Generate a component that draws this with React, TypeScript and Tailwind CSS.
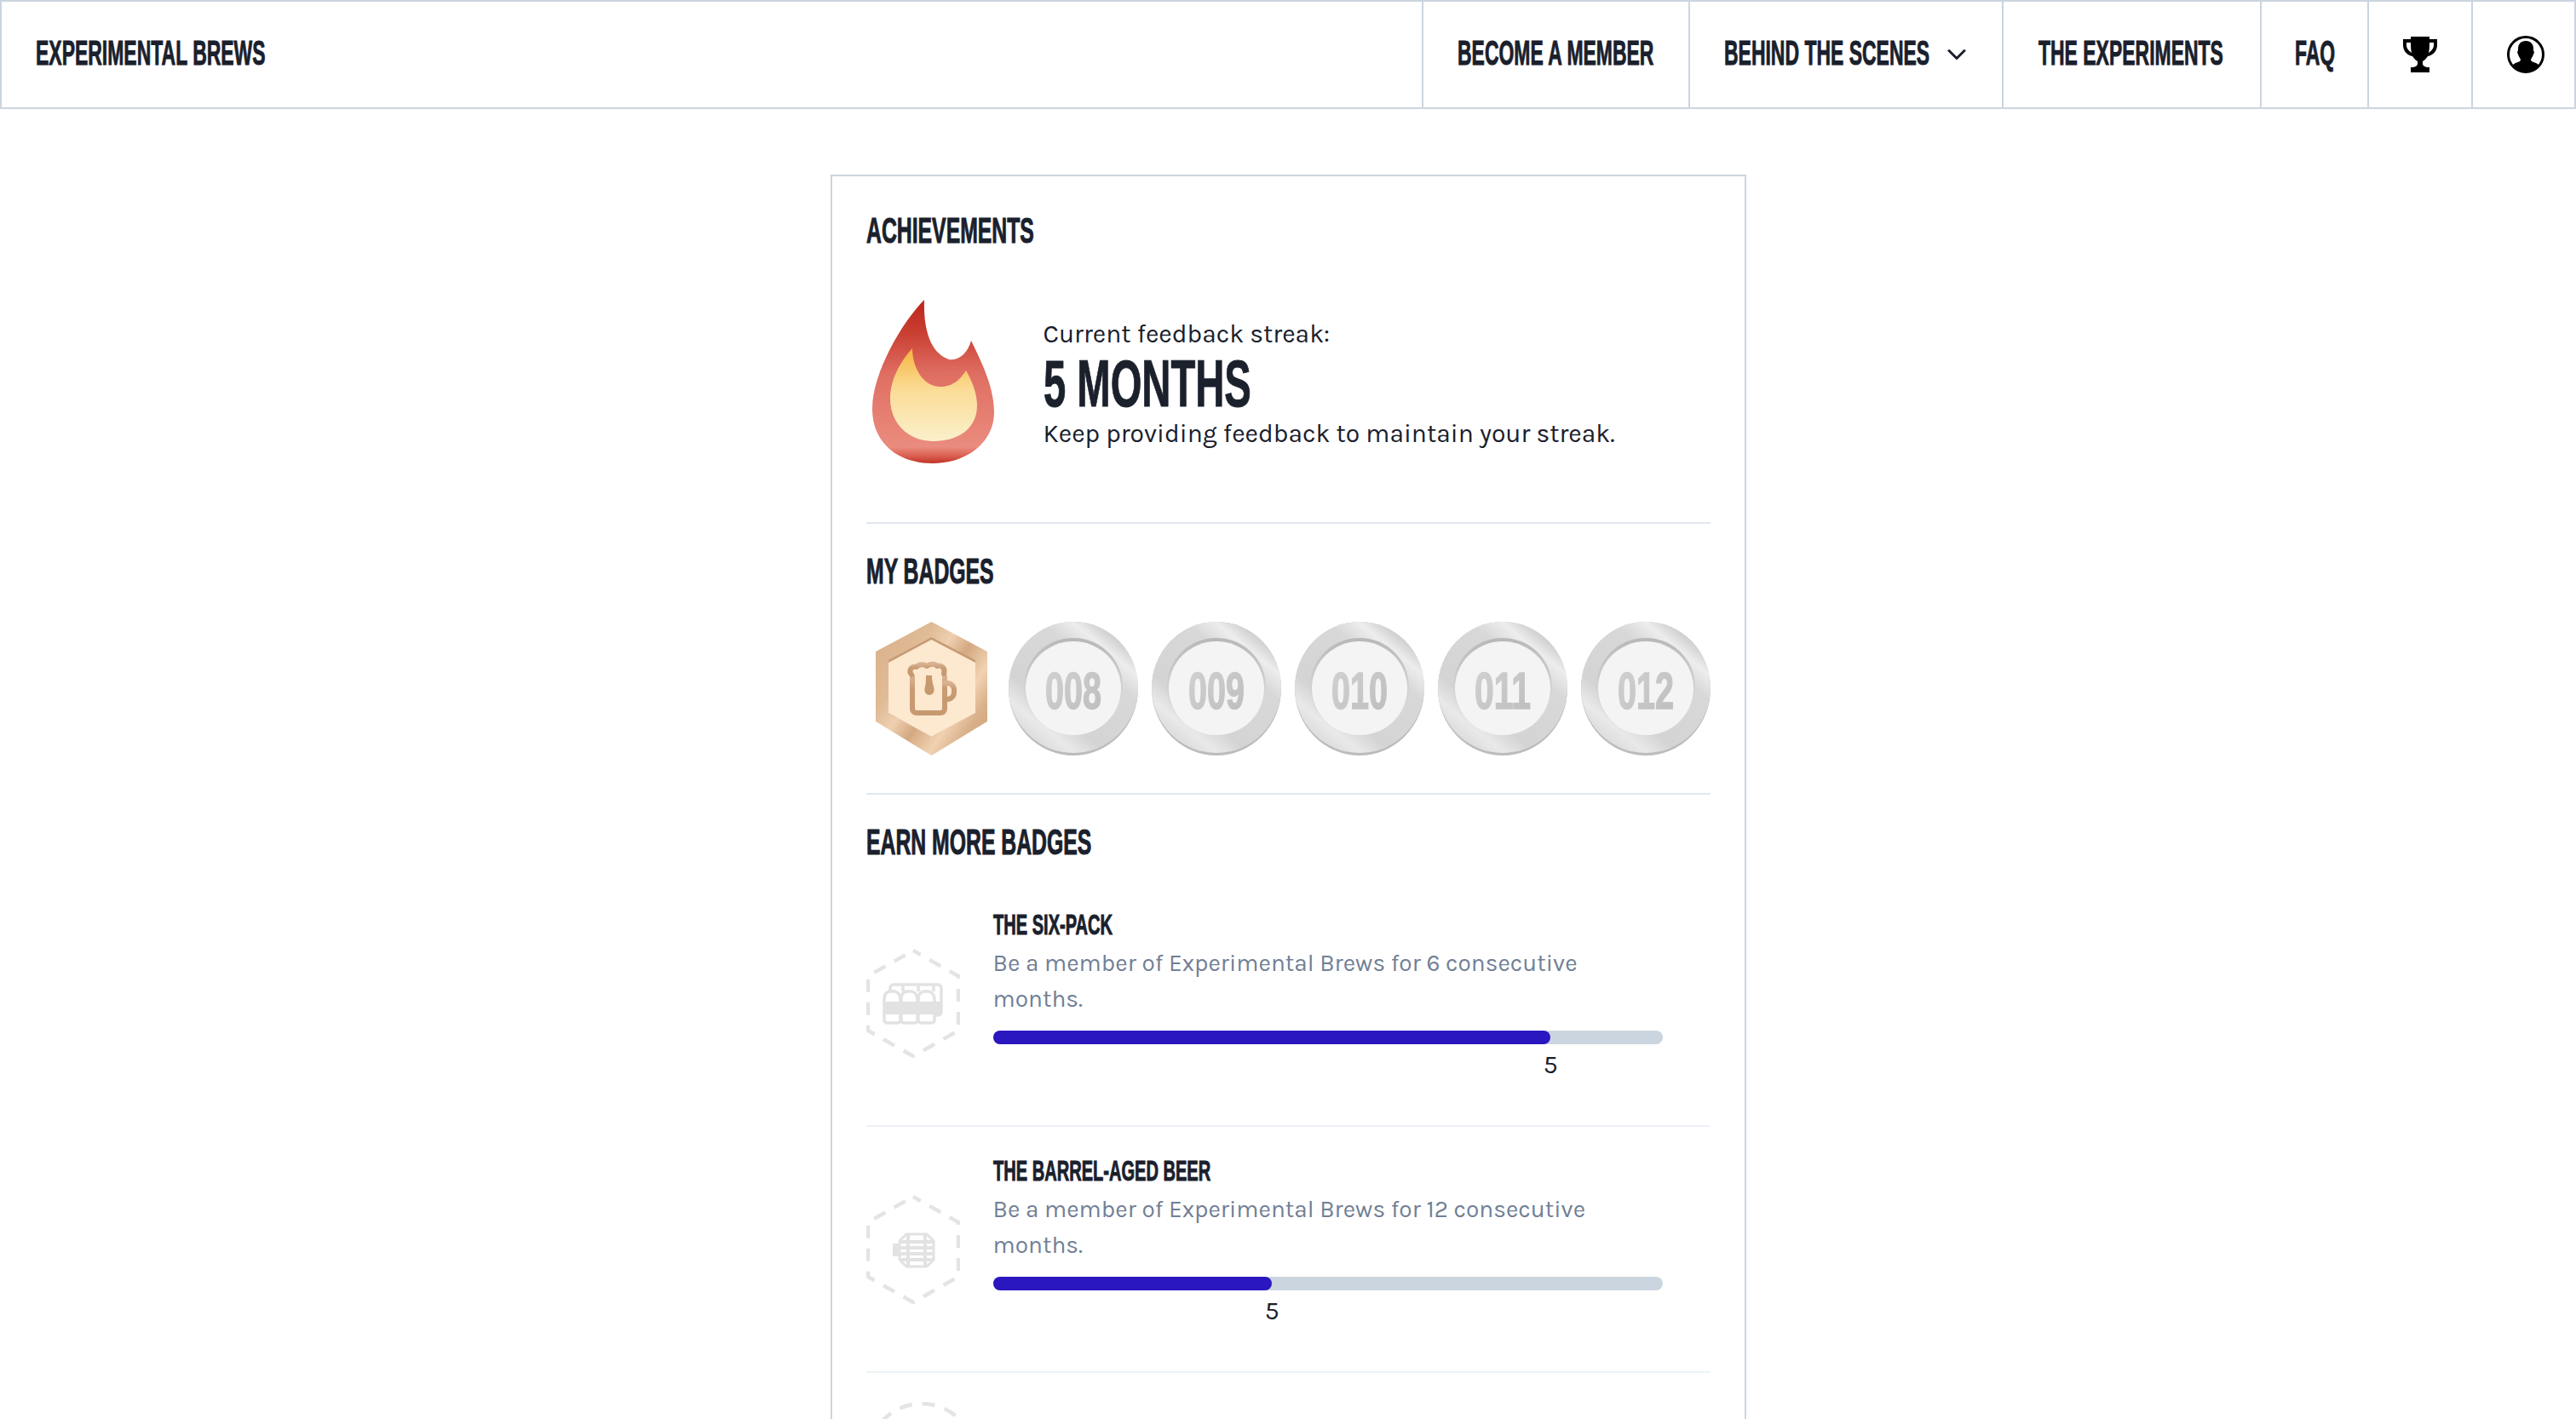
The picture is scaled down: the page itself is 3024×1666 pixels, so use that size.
import React from 'react';
import { ChevronDown } from 'lucide-react';

const heading =
  "block origin-left -translate-y-0.5 whitespace-nowrap font-['Liberation_Sans',sans-serif] font-bold uppercase text-[#1a202c] [-webkit-text-stroke:1px_#1a202c]";
const body = "font-['Karla','Lato','Open_Sans',sans-serif]";
const navText = `${heading} text-[41px] leading-[48px] scale-x-[0.56]`;
const sectionTitle = `${heading} text-[42px] leading-[56px] scale-x-[0.59]`;

const coins = ['008', '009', '010', '011', '012'];

const Coin = ({ label }: { label: string }) => (
  <svg width="152" height="157" viewBox="0 0 152 157">
    <defs>
      <linearGradient id={`ring-${label}`} x1="0.1" y1="1" x2="0.9" y2="0">
        <stop offset="0" stopColor="#cfcfcf" />
        <stop offset="0.2" stopColor="#e9e9e9" />
        <stop offset="0.32" stopColor="#d4d4d4" />
        <stop offset="0.68" stopColor="#d8d8d8" />
        <stop offset="0.8" stopColor="#ededed" />
        <stop offset="0.88" stopColor="#d2d2d2" />
        <stop offset="1" stopColor="#cdcdcd" />
      </linearGradient>
      <linearGradient id={`lip-${label}`} x1="0" y1="0" x2="0" y2="1">
        <stop offset="0" stopColor="#b8b8b8" />
        <stop offset="0.55" stopColor="#d4d4d4" />
        <stop offset="1" stopColor="#e4e4e4" />
      </linearGradient>
      <linearGradient id={`num-${label}`} x1="0" y1="0" x2="1" y2="1">
        <stop offset="0" stopColor="#d2d2d2" />
        <stop offset="1" stopColor="#bdbdbd" />
      </linearGradient>
    </defs>
    <ellipse cx="76" cy="78.5" rx="76" ry="78.5" fill="#bcbcbc" />
    <ellipse cx="76" cy="77" rx="76" ry="77" fill={`url(#ring-${label})`} />
    <ellipse cx="76" cy="76" rx="58" ry="57" fill={`url(#lip-${label})`} />
    <ellipse cx="76" cy="78" rx="56" ry="55" fill="#f4f4f4" />
    <text
      x="76"
      y="102"
      textAnchor="middle"
      fontSize="62"
      fontWeight="700"
      fill={`url(#num-${label})`}
      stroke={`url(#num-${label})`}
      strokeWidth="1.500"
      textLength="66"
      lengthAdjust="spacingAndGlyphs"
      fontFamily="'Liberation Sans', sans-serif"
    >
      {label}
    </text>
  </svg>
);

const Barrel = () => (
  <g>
    <path d="M47 46h24l8 8v22l-8 8H47l-8-8V54z" fill="none" stroke="#e2e2e2" strokeWidth="3" />
    <path
      d="M39 55h40M39 62h40M39 69h40M39 76h40M49 45v39M69 45v39"
      fill="none"
      stroke="#e2e2e2"
      strokeWidth="4"
    />
    <path d="M31 57h8v15h-8z" fill="#e2e2e2" />
  </g>
);

const SixPack = () => (
  <g fill="none" stroke="#e2e2e2" strokeWidth="3.500">
    <rect x="28" y="42" width="60" height="36" rx="4" />
    <path d="M43 42v8M61 42v8M79 42v8" />
    <path d="M27 50c-6 2-6 6-6 10v24c0 2 2 3 4 3h11c2 0 4-1 4-3V60c0-4-1-8-6-10z" fill="#fff" />
    <path d="M47 50c-6 2-6 6-6 10v24c0 2 2 3 4 3h11c2 0 4-1 4-3V60c0-4-1-8-6-10z" fill="#fff" />
    <path d="M67 50c-6 2-6 6-6 10v24c0 2 2 3 4 3h11c2 0 4-1 4-3V60c0-4-1-8-6-10z" fill="#fff" />
    <rect x="21" y="62" width="66" height="15" fill="#e2e2e2" stroke="none" />
  </g>
);

const DashedHex = ({ children }: { children?: React.ReactNode }) => (
  <svg width="110" height="128" viewBox="0 0 110 128" className="shrink-0">
    <path
      d="M55 2 L108 32 L108 96 L55 126 L2 96 L2 32 Z"
      fill="none"
      stroke="#e4e4e4"
      strokeWidth="4.500"
      strokeDasharray="15 12"
      strokeDashoffset="5"
    />
    {children}
  </svg>
);

const BronzeHex = () => (
  <svg width="131" height="157" viewBox="0 0 131 157">
    <defs>
      <linearGradient id="bronze" x1="0" y1="0.1" x2="1" y2="0.9">
        <stop offset="0" stopColor="#d9b18c" />
        <stop offset="0.28" stopColor="#e0bb96" />
        <stop offset="0.42" stopColor="#eed0b0" />
        <stop offset="0.55" stopColor="#d4a981" />
        <stop offset="0.72" stopColor="#f1d2b2" />
        <stop offset="0.85" stopColor="#d8b08a" />
        <stop offset="1" stopColor="#d0a47a" />
      </linearGradient>
      <linearGradient id="mug" x1="0" y1="0" x2="0" y2="1">
        <stop offset="0" stopColor="#d9b291" />
        <stop offset="0.35" stopColor="#c99c75" />
        <stop offset="1" stopColor="#c7996f" />
      </linearGradient>
    </defs>
    <path d="M65.5 0 L131 35 L131 117 L65.5 157 L0 117 L0 35 Z" fill="url(#bronze)" />
    <path d="M65.5 18 L117 45 L117 107 L65.5 135 L15 107 L15 45 Z" fill="#c69c74" />
    <path d="M65.500 21 L117 48 L117 107 L65.5 135 L15 107 L15 48 Z" fill="#fde8d0" />
    <g fill="none" stroke="url(#mug)" strokeWidth="6" strokeLinecap="round" strokeLinejoin="round">
      <path d="M43 64v38c0 3 2 5 5 5h28c3 0 5-2 5-5V64" />
      <path d="M81 72h3a8 8 0 0 1 8 8v3a8 8 0 0 1-8 8h-3" />
      <path d="M42 62c-4-5 0-10 6-9 3-4 9-3 12-1 4-3 10-3 12 0 5-2 10 2 8 9" />
      <path d="M42 63h39" />
    </g>
    <path d="M59 63h7c0 6 1 9 2 13 2 6-1 10-5 10s-7-4-5-10c1-4 1-7 1-13z" fill="#c7996f" />
  </svg>
);

const Flame = () => (
  <svg width="143" height="192" viewBox="0 0 143 192">
    <defs>
      <linearGradient id="outer" x1="0" y1="0" x2="0" y2="1">
        <stop offset="0" stopColor="#bd241a" />
        <stop offset="0.2" stopColor="#c93f32" />
        <stop offset="0.45" stopColor="#df6e62" />
        <stop offset="0.9" stopColor="#ea8c7e" />
        <stop offset="0.96" stopColor="#d85a4c" />
        <stop offset="1" stopColor="#bf3226" />
      </linearGradient>
      <linearGradient id="inner" x1="0" y1="0" x2="0" y2="1">
        <stop offset="0" stopColor="#f6b440" />
        <stop offset="0.45" stopColor="#fbdc97" />
        <stop offset="1" stopColor="#fbf0cb" />
      </linearGradient>
    </defs>
    <path
      d="M61 0 C60 30 66 62 90 70 C102 72 112 62 116 48 C134 84 143 108 143 132 C143 168 110 192 71 192 C30 192 0 168 0 128 C0 85 36 25 61 0 Z"
      fill="url(#outer)"
    />
    <path
      d="M47 57 C47 80 60 102 80 102 C96 102 104 92 110 83 C120 100 123 114 123 124 C123 152 100 166 72 166 C42 166 21 145 21 116 C21 94 33 72 47 57 Z"
      fill="url(#inner)"
    />
  </svg>
);

const BadgeRow = ({
  icon,
  title,
  months,
  percent,
}: {
  icon: React.ReactNode;
  title: string;
  months: number;
  percent: number;
}) => (
  <div className="flex h-[289px] border-b-2 border-[#edf2f7] pt-[35px] items-start">
    <div className="w-[149px] shrink-0 pt-[45px]">
      <DashedHex>{icon}</DashedHex>
    </div>
    <div className="w-[786px]">
      <h4 className={`${heading} text-[34px] leading-[36px] scale-x-[0.59]`}>{title}</h4>
      <p className={`${body} text-[28px] leading-[42px] text-[#718096] mt-[5px] mb-[16px]`}>
        {`Be a member of Experimental Brews for ${months} consecutive months.`}
      </p>
      <div className="h-4 rounded-full bg-[#cbd5e0]">
        <div className="h-4 rounded-full bg-[#2a17bf] relative" style={{ width: `${percent}%` }}>
          <span className={`${body} absolute right-0 top-[22px] translate-x-1/2 text-[30px] leading-[36px] text-[#1a202c]`}>
            5
          </span>
        </div>
      </div>
    </div>
  </div>
);

const navCell = 'flex items-center justify-center border-l-2 border-[#cbd5e0]';

export default function App() {
  return (
    <div className="h-[1666px] overflow-hidden bg-white">
      <nav className="flex h-[128px] border-2 border-[#cbd5e0] justify-between">
        <div className="flex items-center pl-10">
          <span className={`${navText} w-[270px]`}>Experimental Brews</span>
        </div>
        <div className="flex">
          <a className={`${navCell} w-[313px]`}>
            <span className={`${navText} w-[231px]`}>Become a member</span>
          </a>
          <a className={`${navCell} w-[368px] !justify-start pl-10 gap-[17px]`}>
            <span className={`${navText} w-[238px]`}>Behind the scenes</span>
            <ChevronDown className="w-9 h-9 text-[#1a202c]" strokeWidth={2} />
          </a>
          <a className={`${navCell} w-[303px]`}>
            <span className={`${navText} w-[220px]`}>The experiments</span>
          </a>
          <a className={`${navCell} w-[126px]`}>
            <span className={`${navText} w-[46px]`}>FAQ</span>
          </a>
          <a className={`${navCell} w-[122px]`}>
            <svg width="40" height="42" viewBox="0 0 40 42" fill="#000">
              <path
                fillRule="evenodd"
                d="M9 0h22v3h9v7c0 7-5 12-11 13-2 3-4 5-6 6v3c0 2 2 3 5 4h3v6H9v-6h3c3-1 5-2 5-4v-3c-2-1-4-3-6-6C5 22 0 17 0 10V3h9V0zM4 7v3c0 4 3 7 6 9-1-4-1-8-1-12H4zm32 0h-5c0 4 0 8-1 12 3-2 6-5 6-9V7z"
              />
            </svg>
          </a>
          <a className={`${navCell} w-[121px] pl-[5px]`}>
            <svg width="44" height="44" viewBox="0 0 44 44">
              <circle cx="22" cy="22" r="20.500" fill="#fff" stroke="#000" strokeWidth="3" />
              <path
                d="M22 6c6 0 9 4 9 9 0 2 0 3 1 4-1 4-3 7-4 9 0 2 3 3 6 4 2 1 3 2 4 3a21 21 0 0 1-32 0c1-1 2-2 4-3 3-1 6-2 6-4-1-2-3-5-4-9 1-1 1-2 1-4 0-5 3-9 9-9z"
                fill="#000"
              />
            </svg>
          </a>
        </div>
      </nav>

      <main className="mx-auto mt-[77px] w-[1075px] border-2 border-[#cbd5e0] px-10 pt-[38px]">
        <h2 className={sectionTitle}>Achievements</h2>

        <section className="flex items-center pt-[51px] pb-[69px] border-b-2 border-[#e2e8f0]">
          <div className="w-[208px] pl-[7px] shrink-0">
            <Flame />
          </div>
          <div className={`${body} text-[30px] text-[#1a202c] pt-[5px]`}>
            <p className="leading-[36px]">Current feedback streak:</p>
            <p className={`${heading} text-[78px] leading-[78px] scale-x-[0.605] mt-[3px]`}>5 months</p>
            <p className="leading-[36px]">Keep providing feedback to maintain your streak.</p>
          </div>
        </section>

        <section className="border-b-2 border-[#e2e8f0] pt-[30px] pb-[44px]">
          <h3 className={sectionTitle}>My badges</h3>
          <div className="flex items-center mt-[29px] pl-[11px] gap-4">
            <div className="mr-[9px]">
              <BronzeHex />
            </div>
            {coins.map((c) => (
              <Coin key={c} label={c} />
            ))}
          </div>
        </section>

        <section className="pt-[30px]">
          <h3 className={`${sectionTitle} mb-[15px]`}>Earn more badges</h3>
          <BadgeRow icon={<SixPack />} title="The six-pack" months={6} percent={83.3} />
          <BadgeRow icon={<Barrel />} title="The barrel-aged beer" months={12} percent={41.7} />
          <div className="pt-[34px]">
            <svg width="130" height="130" viewBox="0 0 130 130">
              <circle cx="65" cy="65" r="63" fill="none" stroke="#e4e4e4" strokeWidth="4.500" strokeDasharray="15 12" />
            </svg>
          </div>
        </section>
      </main>
    </div>
  );
}
